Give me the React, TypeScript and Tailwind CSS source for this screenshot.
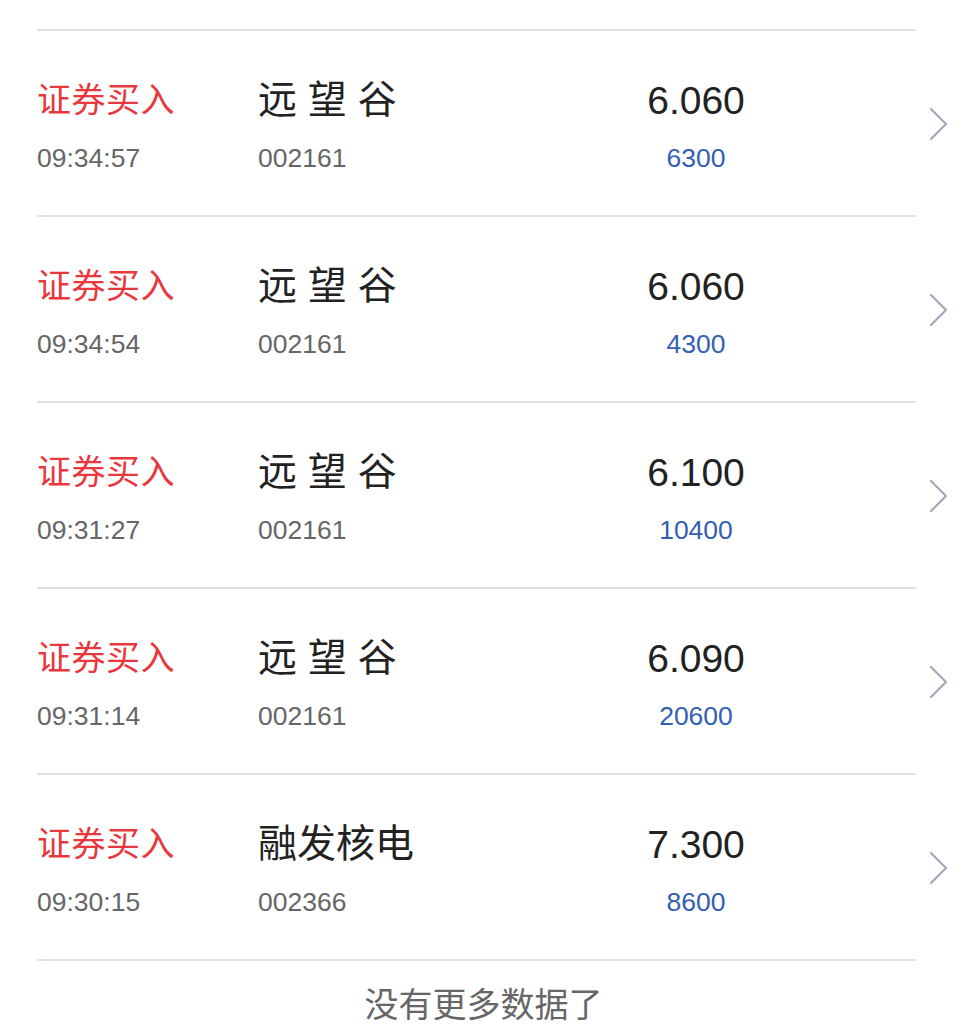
const rows = [
  { time: "09:34:57", name: "远 望 谷", code: "002161", price: "6.060", qty: "6300" },
  { time: "09:34:54", name: "远 望 谷", code: "002161", price: "6.060", qty: "4300" },
  { time: "09:31:27", name: "远 望 谷", code: "002161", price: "6.100", qty: "10400" },
  { time: "09:31:14", name: "远 望 谷", code: "002161", price: "6.090", qty: "20600" },
  { time: "09:30:15", name: "融发核电", code: "002366", price: "7.300", qty: "8600" },
];

const font = { fontFamily: '"Liberation Sans", "Noto Sans CJK SC", sans-serif' };

function Chevron() {
  return (
    <svg width="24" height="36" viewBox="0 0 24 36" fill="none">
      <path d="M5 3 L20 18 L5 33" stroke="#a3a8ba" strokeWidth="2.2" strokeLinecap="round" strokeLinejoin="round" />
    </svg>
  );
}

export default function App() {
  return (
    <div className="w-[967px] h-[1024px] bg-white overflow-hidden" style={font}>
      <div className="pt-[29px]">
        <div className="ml-[37px] w-[879px] h-[2px] bg-[#dfdfe7]" />
        {rows.map((r, i) => (
          <div key={i} className="flex items-stretch">
            <div className="ml-[37px] w-[879px] h-[186px] flex border-b-2 border-[#dfdfe7]">
              <div className="w-[221px] flex flex-col pt-[48px]">
                <div className="text-[34px] leading-[42px] text-[#e8383d] tracking-[0.5px]">证券买入</div>
                <div className="mt-[21px] text-[26.5px] leading-[32px] text-[#666666]">{r.time}</div>
              </div>
              <div className="w-[340px] flex flex-col pt-[46px]">
                <div className="text-[39px] leading-[46px] text-[#222222] whitespace-pre">{r.name}</div>
                <div className="mt-[19px] text-[26.5px] leading-[32px] text-[#666666]">{r.code}</div>
              </div>
              <div className="w-[196px] flex flex-col items-center pt-[47px]">
                <div className="text-[39px] leading-[46px] text-[#222222]">{r.price}</div>
                <div className="mt-[18px] text-[26.5px] leading-[32px] text-[#3360b3]">{r.qty}</div>
              </div>
            </div>
            <div className="flex-1 flex items-center pl-[10px]">
              <Chevron />
            </div>
          </div>
        ))}
        <div className="text-center text-[34px] leading-[44px] text-[#666666] mt-[22px]">没有更多数据了</div>
      </div>
    </div>
  );
}
